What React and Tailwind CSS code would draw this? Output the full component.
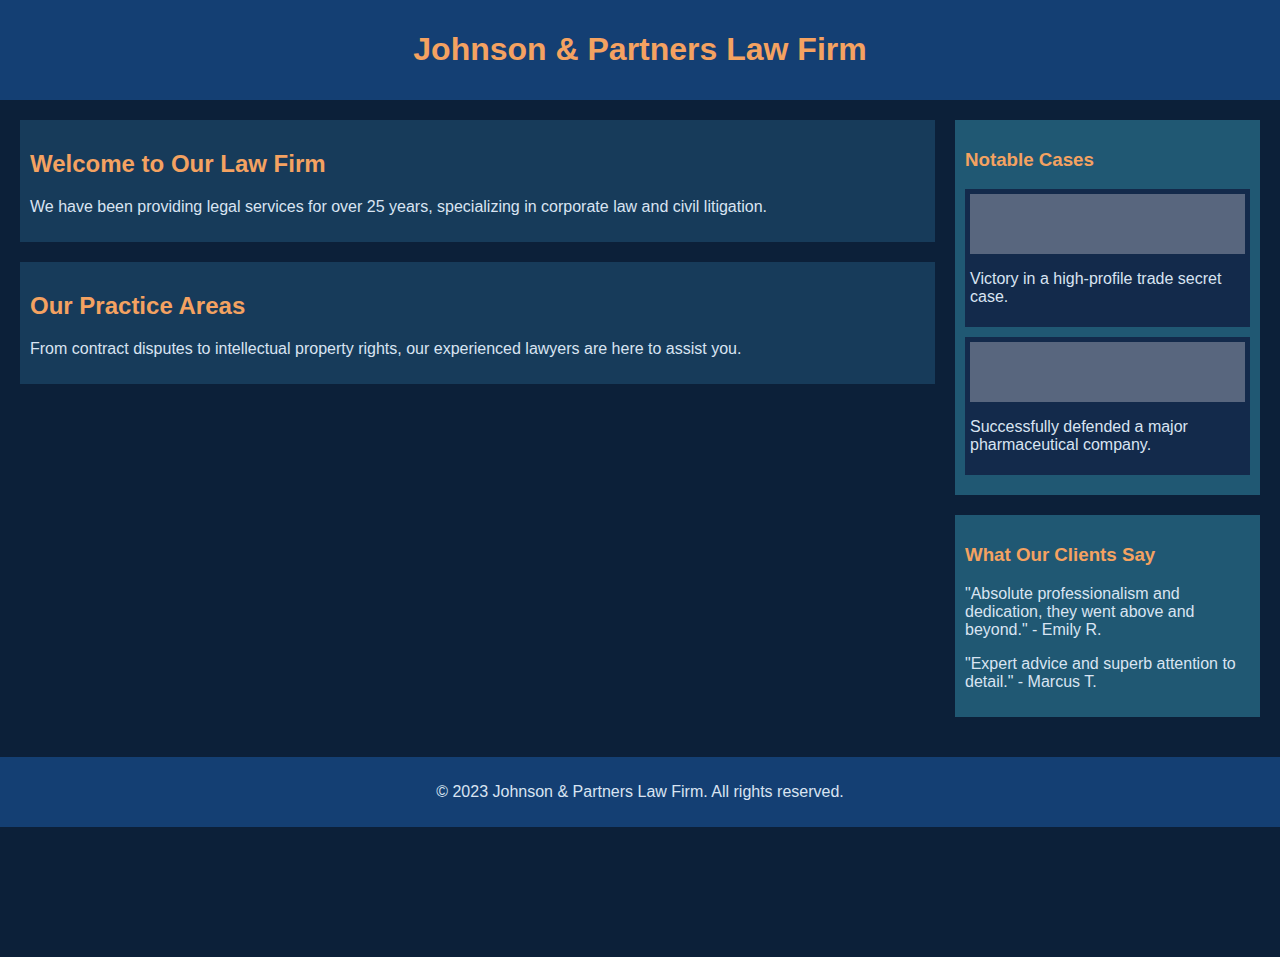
export default function App() {
  const cases = [
    "Victory in a high-profile trade secret case.",
    "Successfully defended a major pharmaceutical company.",
  ];

  return (
    <div className="min-h-[957px] bg-[#0c2039] font-['Liberation_Sans',Arial,sans-serif] text-[#d9e4f2] leading-[normal]">
      {/* Header */}
      <header className="h-[100px] bg-[#143f73] flex items-center justify-center pb-[2px]">
        <h1 className="text-[32px] font-bold text-[#f4a261]">Johnson &amp; Partners Law Firm</h1>
      </header>

      {/* Content */}
      <main className="flex gap-5 p-5 mb-5 items-start">
        <div className="flex-[3] flex flex-col gap-5">
          <section className="bg-[#173b5a] p-[10px]">
            <h2 className="text-[24px] font-bold text-[#f4a261] my-[19.92px]">Welcome to Our Law Firm</h2>
            <p className="text-[16px] my-4">
              We have been providing legal services for over 25 years, specializing in corporate law and civil litigation.
            </p>
          </section>
          <section className="bg-[#173b5a] p-[10px]">
            <h2 className="text-[24px] font-bold text-[#f4a261] my-[19.92px]">Our Practice Areas</h2>
            <p className="text-[16px] my-4">
              From contract disputes to intellectual property rights, our experienced lawyers are here to assist you.
            </p>
          </section>
        </div>

        <aside className="flex-1 flex flex-col gap-5">
          <section className="bg-[#205873] p-[10px]">
            <h3 className="text-[18.72px] font-bold text-[#f4a261] my-[18.72px]">Notable Cases</h3>
            {cases.map((c) => (
              <div key={c} className="bg-[#132a4b] p-[5px] mb-[10px]">
                <div className="h-[60px] bg-[#58667e]" />
                <p className="text-[16px] my-4">{c}</p>
              </div>
            ))}
          </section>
          <section className="bg-[#205873] p-[10px]">
            <h3 className="text-[18.72px] font-bold text-[#f4a261] my-[18.72px]">What Our Clients Say</h3>
            <p className="text-[16px] my-4">"Absolute professionalism and dedication, they went above and beyond." - Emily R.</p>
            <p className="text-[16px] my-4">"Expert advice and superb attention to detail." - Marcus T.</p>
          </section>
        </aside>
      </main>

      {/* Footer */}
      <footer className="h-[70px] bg-[#143f73] flex items-center justify-center">
        <p className="text-[16px]">© 2023 Johnson &amp; Partners Law Firm. All rights reserved.</p>
      </footer>
    </div>
  );
}
